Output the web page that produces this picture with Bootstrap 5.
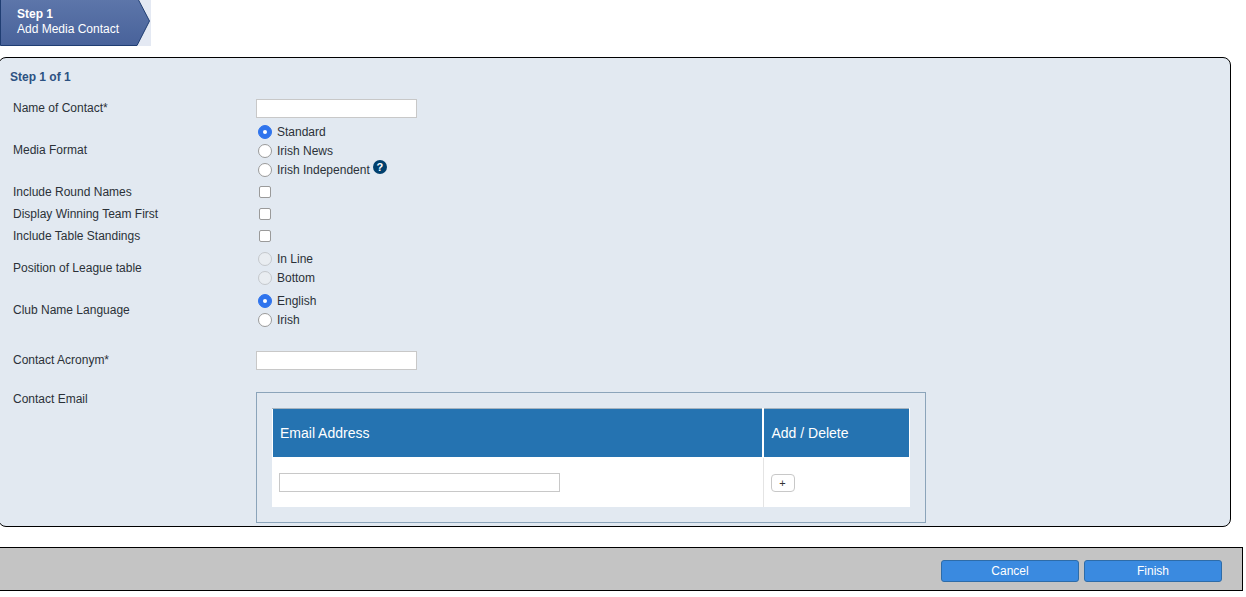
<!DOCTYPE html>
<html lang="en">
<head>
    <meta charset="UTF-8">
    <meta name="viewport" content="width=device-width, initial-scale=1.0">
    <title>Add Media Contact</title>
    <link href="https://cdn.jsdelivr.net/npm/bootstrap@5.3.2/dist/css/bootstrap.min.css" rel="stylesheet">
    <style>
        body {
            background-color: #fff;
            color: #2b3138;
            font-family: "Liberation Sans", Arial, sans-serif;
            font-size: 12px;
            line-height: 19px;
            overflow: hidden;
        }
        .step-tab {
            position: relative;
            width: 151px;
            height: 46px;
            background-color: #e4e9f3;
            color: #fff;
            padding: 7px 0 0 17px;
            line-height: 15px;
        }
        .step-tab svg {
            position: absolute;
            left: 0;
            top: 0;
        }
        .step-tab span {
            position: relative;
            display: block;
        }
        .wizard-panel {
            width: 1233px;
            height: 470px;
            margin: 11px 0 0 -2px;
            padding: 9px 0 0 11px;
            background-color: #e2e9f1;
            border: 1px solid #000;
            border-radius: 8px;
        }
        .step-title {
            color: #2c5282;
            font-weight: 700;
            line-height: 20px;
            margin-bottom: 10px;
        }
        .field-label {
            width: 246px;
            padding-left: 3px;
            flex-shrink: 0;
        }
        .row-text { height: 22px; }
        .row-media { margin-top: 3px; }
        .row-check { height: 22px; }
        .row-check-first { margin-top: 2px; }
        .row-position { height: 38px; margin-top: 2px; }
        .row-language { height: 38px; margin-top: 4px; }
        .row-acronym { height: 19px; margin-top: 22px; }
        .row-email { margin-top: 22px; }
        .email-label { margin-top: -2px; }
        .form-control.field-input {
            width: 161px;
            height: 19px;
            min-height: 0;
            padding: 0 4px;
            font-size: 12px;
            border: 1px solid #c8c8c8;
            border-radius: 0;
        }
        .radio-line {
            height: 19px;
            gap: 5px;
            margin-left: 2px;
        }
        .radio-text {
            margin-top: 2px;
        }
        .form-check-input.radio-in,
        .form-check-input.check-in {
            margin: 0;
            flex-shrink: 0;
            background-color: #fff;
            border: 1px solid #9a9a9a;
        }
        .form-check-input.radio-in {
            width: 14px;
            height: 14px;
        }
        .form-check-input.radio-in:checked {
            background-color: #2f74ed;
            border-color: #2f74ed;
            background-size: 8px;
            background-position: center;
        }
        .form-check-input.radio-in:disabled {
            background-color: #e9edf1;
            border-color: #c4c8cc;
            opacity: 1;
        }
        .form-check-input.check-in {
            width: 12px;
            height: 12px;
            margin-left: 3px;
            border-radius: 2px;
        }
        .help-dot {
            width: 14px;
            height: 14px;
            margin: -5px 0 0 -2px;
            border-radius: 50%;
            background-color: #00406e;
            color: #fff;
            font-size: 11px;
            font-weight: 700;
            line-height: 14px;
            text-align: center;
        }
        .email-box {
            width: 670px;
            height: 131px;
            padding: 15px 15px 0 15px;
            border: 1px solid #8ba4ba;
        }
        .email-table {
            width: 638px;
            margin: 0;
            table-layout: fixed;
            border-collapse: collapse;
            background-color: #fff;
        }
        .email-table th {
            height: 49px;
            padding: 0 0 0 7px;
            background-color: #2573b1;
            color: #fff;
            font-size: 14px;
            font-weight: 400;
            vertical-align: middle;
            border: 1px solid #fff;
            border-top-color: #a6b4c0;
            border-right-width: 2px;
        }
        .email-table th:first-child {
            width: 490px;
        }
        .email-table th:last-child {
            border-right-width: 1px;
            padding-left: 8px;
        }
        .email-table td {
            height: 49px;
            padding: 0 0 0 6px;
            vertical-align: middle;
            background-color: #fff;
            border: 0;
        }
        .email-table td:last-child {
            box-shadow: inset 1px 0 0 #e4e4e4;
            padding-left: 8px;
        }
        .form-control.email-input {
            width: 281px;
        }
        .btn.add-btn {
            display: block;
            width: 24px;
            height: 18px;
            margin-top: 2px;
            padding: 0;
            font-size: 11px;
            line-height: 16px;
            color: #333;
            background-color: #fff;
            border: 1px solid #c8c8c8;
            border-radius: 4px;
        }
        .footer-bar {
            width: 1245px;
            height: 44px;
            margin: 20px 0 0 -2px;
            padding: 12px 20px 0 0;
            gap: 5px;
            background-color: #c4c4c4;
            border: 1px solid #000;
        }
        .btn.bar-btn {
            width: 138px;
            height: 22px;
            padding: 0;
            font-size: 12px;
            font-weight: 400;
            line-height: 20px;
            color: #fff;
            background-color: #3a8ae0;
            border: 1px solid #2e6ca8;
            border-radius: 3px;
        }
    </style>
</head>

<body>
    <div class="step-tab">
        <svg width="151" height="46" viewBox="0 0 151 46" aria-hidden="true">
            <defs>
                <linearGradient id="tabFill" x1="0" y1="0" x2="0" y2="1">
                    <stop offset="0" stop-color="#5d76aa"/>
                    <stop offset="1" stop-color="#48629a"/>
                </linearGradient>
            </defs>
            <polygon points="0.5,-1 138,-1 149.5,21 137,45.5 0.5,45.5" fill="url(#tabFill)" stroke="#1f3d72"/>
        </svg>
        <span class="fw-bold">Step 1</span>
        <span>Add Media Contact</span>
    </div>

    <div class="wizard-panel">
        <div class="step-title">Step 1 of 1</div>
        <form>
            <div class="d-flex align-items-center row-text">
                <div class="field-label">Name of Contact*</div>
                <input type="text" class="form-control field-input">
            </div>
            <div class="d-flex align-items-center row-media">
                <div class="field-label">Media Format</div>
                <div>
                    <div class="d-flex align-items-center radio-line"><input class="form-check-input radio-in" type="radio" name="format" checked><span class="radio-text">Standard</span></div>
                    <div class="d-flex align-items-center radio-line"><input class="form-check-input radio-in" type="radio" name="format"><span class="radio-text">Irish News</span></div>
                    <div class="d-flex align-items-center radio-line"><input class="form-check-input radio-in" type="radio" name="format"><span class="radio-text">Irish Independent</span><span class="help-dot">?</span></div>
                </div>
            </div>
            <div class="d-flex align-items-center row-check row-check-first">
                <div class="field-label">Include Round Names</div>
                <input class="form-check-input check-in" type="checkbox">
            </div>
            <div class="d-flex align-items-center row-check">
                <div class="field-label">Display Winning Team First</div>
                <input class="form-check-input check-in" type="checkbox">
            </div>
            <div class="d-flex align-items-center row-check">
                <div class="field-label">Include Table Standings</div>
                <input class="form-check-input check-in" type="checkbox">
            </div>
            <div class="d-flex align-items-center row-position">
                <div class="field-label">Position of League table</div>
                <div>
                    <div class="d-flex align-items-center radio-line"><input class="form-check-input radio-in" type="radio" name="position" disabled><span class="radio-text">In Line</span></div>
                    <div class="d-flex align-items-center radio-line"><input class="form-check-input radio-in" type="radio" name="position" disabled><span class="radio-text">Bottom</span></div>
                </div>
            </div>
            <div class="d-flex align-items-center row-language">
                <div class="field-label">Club Name Language</div>
                <div>
                    <div class="d-flex align-items-center radio-line"><input class="form-check-input radio-in" type="radio" name="language" checked><span class="radio-text">English</span></div>
                    <div class="d-flex align-items-center radio-line"><input class="form-check-input radio-in" type="radio" name="language"><span class="radio-text">Irish</span></div>
                </div>
            </div>
            <div class="d-flex align-items-center row-acronym">
                <div class="field-label">Contact Acronym*</div>
                <input type="text" class="form-control field-input">
            </div>
            <div class="d-flex row-email">
                <div class="field-label email-label">Contact Email</div>
                <div class="email-box">
                    <table class="table email-table">
                        <thead>
                            <tr><th>Email Address</th><th>Add / Delete</th></tr>
                        </thead>
                        <tbody>
                            <tr>
                                <td><input type="text" class="form-control field-input email-input"></td>
                                <td><button type="button" class="btn add-btn">+</button></td>
                            </tr>
                        </tbody>
                    </table>
                </div>
            </div>
        </form>
    </div>

    <div class="footer-bar d-flex justify-content-end">
        <button type="button" class="btn bar-btn">Cancel</button>
        <button type="button" class="btn bar-btn">Finish</button>
    </div>

    <script src="https://cdn.jsdelivr.net/npm/bootstrap@5.3.2/dist/js/bootstrap.bundle.min.js"></script>
</body>
</html>
